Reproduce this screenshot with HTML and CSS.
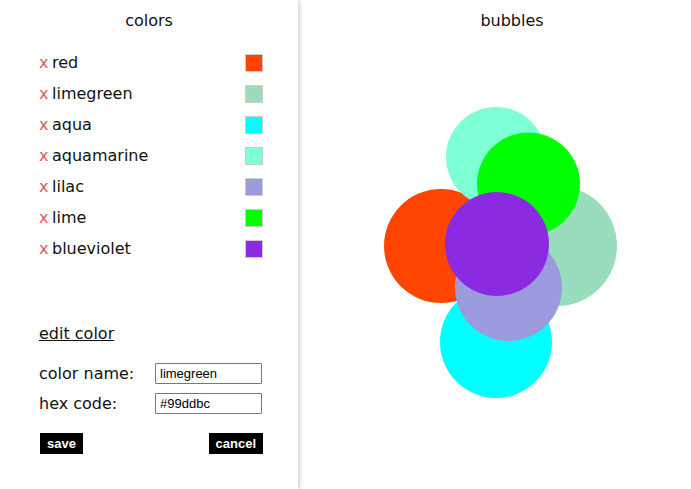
FILE: index.html
```html
<!DOCTYPE html>
<html>
<head>
<meta charset="utf-8">
<link rel="stylesheet" href="styles.css">
</head>
<body>
<div class="app">
  <div class="panel left">
    <h2 class="title">colors</h2>
    <ul class="list">
      <li class="row"><span class="del">x</span><span class="name">red</span><span class="swatch" style="background:#ff4500"></span></li>
      <li class="row"><span class="del">x</span><span class="name">limegreen</span><span class="swatch" style="background:#99ddbc"></span></li>
      <li class="row"><span class="del">x</span><span class="name">aqua</span><span class="swatch" style="background:#00ffff"></span></li>
      <li class="row"><span class="del">x</span><span class="name">aquamarine</span><span class="swatch" style="background:#7fffd4"></span></li>
      <li class="row"><span class="del">x</span><span class="name">lilac</span><span class="swatch" style="background:#9b9bdd"></span></li>
      <li class="row"><span class="del">x</span><span class="name">lime</span><span class="swatch" style="background:#00ff00"></span></li>
      <li class="row"><span class="del">x</span><span class="name">blueviolet</span><span class="swatch" style="background:#8a2be2"></span></li>
    </ul>
    <div class="edit">
      <div class="edit-title">edit color</div>
      <div class="field"><label class="label">color name:</label><input class="input" type="text" value="limegreen"></div>
      <div class="field"><label class="label">hex code:</label><input class="input" type="text" value="#99ddbc"></div>
      <div class="buttons"><button class="btn">save</button><button class="btn">cancel</button></div>
    </div>
  </div>
  <div class="panel right">
    <h2 class="title">bubbles</h2>
    <svg class="bubbles" width="428" height="440" viewBox="298 40 428 440">
      <circle cx="441" cy="246" r="57" fill="#ff4500"/>
      <circle cx="557" cy="246" r="60" fill="#99ddbc"/>
      <circle cx="496" cy="342" r="56" fill="#00ffff"/>
      <circle cx="496" cy="157" r="50" fill="#7fffd4"/>
      <circle cx="508.5" cy="287.5" r="53.5" fill="#9b9bdd"/>
      <circle cx="528.5" cy="184" r="51.5" fill="#00ff00"/>
      <circle cx="497" cy="244" r="52" fill="#8a2be2"/>
    </svg>
  </div>
</div>
</body>
</html>
```
FILE: styles.css
```css
html, body {
  margin: 0;
  padding: 0;
  background: #fff;
}
body {
  font-family: "DejaVu Sans", sans-serif;
  color: #111;
}
.app {
  display: flex;
  width: 691px;
  height: 489px;
  overflow: hidden;
}
.panel {
  height: 489px;
}
.left {
  width: 298px;
  flex: none;
  box-shadow: 2px 0 4px rgba(0,0,0,0.18);
  position: relative;
  z-index: 1;
}
.right {
  width: 428px;
  flex: none;
  display: flex;
  flex-direction: column;
}
.title {
  margin: 0;
  padding-top: 11px;
  height: 29px;
  font-size: 16px;
  font-weight: normal;
  text-align: center;
  line-height: 20px;
}
.list {
  list-style: none;
  margin: 0;
  padding: 7px 35px 0 39px;
}
.row {
  display: flex;
  align-items: center;
  height: 31px;
  font-size: 16px;
}
.del {
  color: #e05a5a;
  width: 13px;
}
.name {
  flex: 1;
}
.swatch {
  width: 16px;
  height: 16px;
  border: 1px solid #ccc;
}
.edit {
  padding: 60px 35px 0 39px;
}
.edit-title {
  font-size: 16px;
  text-decoration: underline;
  line-height: 20px;
  margin-bottom: 14px;
}
.field {
  display: flex;
  align-items: center;
  height: 30px;
  font-size: 16px;
}
.label {
  width: 116px;
}
.input {
  box-sizing: border-box;
  width: 107px;
  height: 21px;
  border: 1px solid #777;
  border-radius: 1px;
  padding: 0 4px;
  font-family: "Liberation Sans", Arial, sans-serif;
  font-size: 13px;
  color: #000;
}
.buttons {
  display: flex;
  justify-content: space-between;
  margin-top: 15px;
  padding-left: 1px;
}
.btn {
  background: #000;
  color: #fff;
  border: none;
  border-radius: 0;
  height: 21px;
  padding: 0 7px;
  font-family: "Liberation Sans", Arial, sans-serif;
  font-size: 13px;
  font-weight: bold;
}
.bubbles {
  display: block;
}
```
